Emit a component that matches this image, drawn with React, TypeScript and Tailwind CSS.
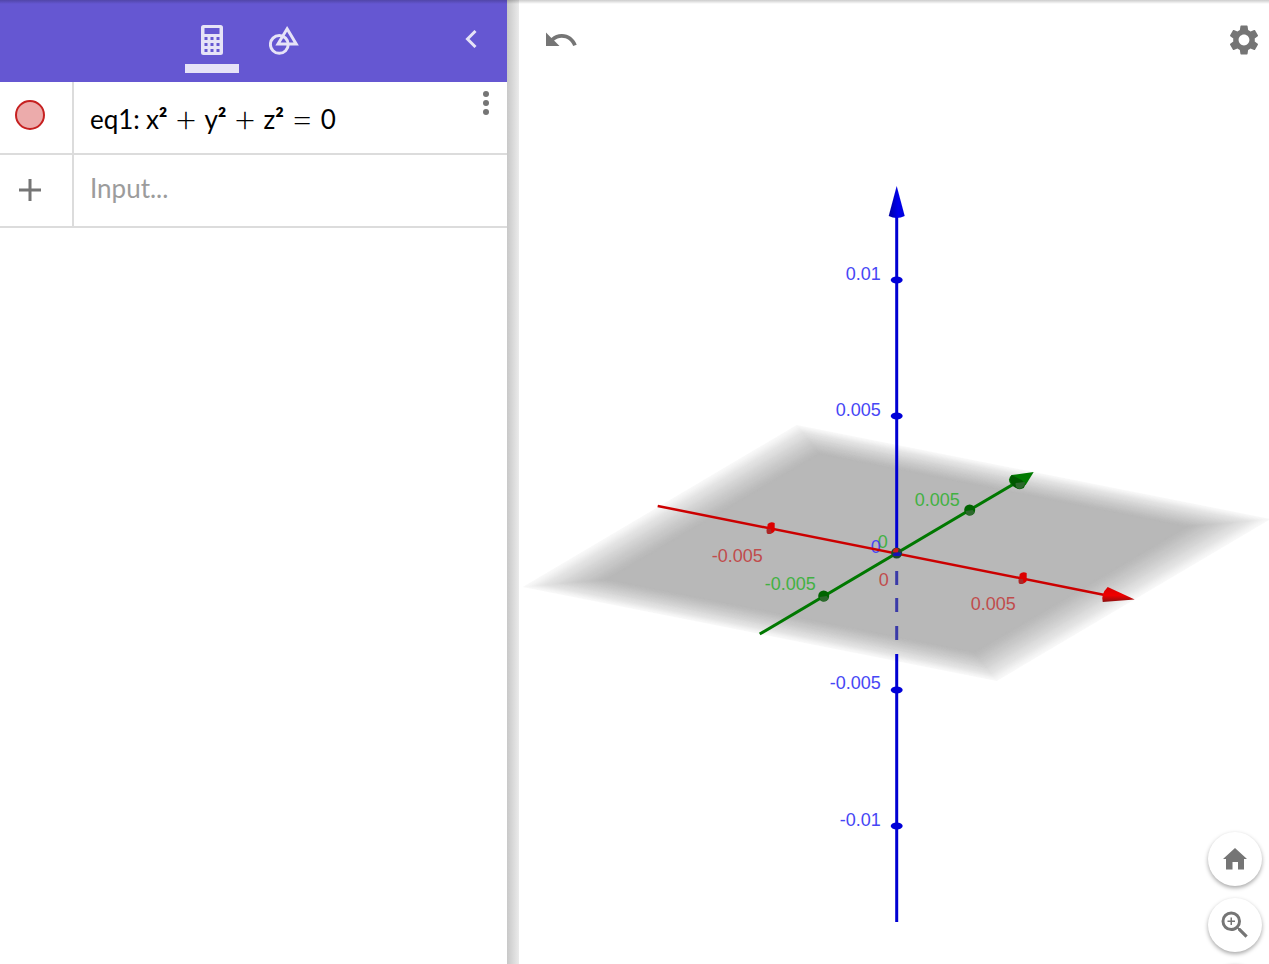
import { MdSettings, MdUndo, MdZoomIn, MdZoomOut } from 'react-icons/md';

type Point = { x: number; y: number };
type Label = Point & { text: string };

// All scene coordinates are relative to the origin of the axes
const X_LABELS: Label[] = [
  { x: -134, y: 9, text: '-0.005' },
  { x: -8, y: 33, text: '0' },
  { x: 119, y: 57, text: '0.005' },
];

const Y_LABELS: Label[] = [
  { x: -81, y: 37, text: '-0.005' },
  { x: -9, y: -5, text: '0' },
  { x: 63, y: -47, text: '0.005' },
];

const Z_LABELS: Label[] = [
  { x: -16, y: -273, text: '0.01' },
  { x: -16, y: -137, text: '0.005' },
  { x: -16, y: 0, text: '0' },
  { x: -16, y: 136, text: '-0.005' },
  { x: -16, y: 273, text: '-0.01' },
];

const X_TICKS: Point[] = [{ x: -126, y: -25 }, { x: 126, y: 25 }];
const Y_TICKS: Point[] = [{ x: -73, y: 43 }, { x: 73, y: -43 }];
const Z_TICKS = [-273, -137, 137, 273];

// The plane fades out towards its border: nested layers add up to a linear ramp
const FADE_STEPS = 32;
const FADE_WIDTH = 0.23;
const EDGE_ALPHA = 0.1;

const planeLayers = Array.from({ length: FADE_STEPS + 1 }, (_, i) => {
  const alphaAt = (n: number) => (n < 0 ? 0 : EDGE_ALPHA + (1 - EDGE_ALPHA) * (n / FADE_STEPS));
  const previous = alphaAt(i - 1);
  return {
    half: 1 - (FADE_WIDTH * i) / FADE_STEPS,
    opacity: (alphaAt(i) - previous) / (1 - previous),
  };
});

function CalculatorIcon() {
  return (
    <svg viewBox="0 0 22 30" className="h-[30px] w-[22px]" fill="currentColor" aria-hidden="true">
      <path
        fillRule="evenodd"
        d="M2.5 0h17A2.5 2.5 0 0 1 22 2.5v25a2.5 2.5 0 0 1-2.5 2.5h-17A2.5 2.5 0 0 1 0 27.5v-25A2.5 2.5 0 0 1 2.5 0zM3.5 3v6h15V3zM3.5 12v3h3v-3zM9.5 12v3h3v-3zM15.5 12v3h3v-3zM3.5 18v3h3v-3zM9.5 18v3h3v-3zM15.5 18v3h3v-3zM3.5 24v3h3v-3zM9.5 24v3h3v-3zM15.5 24v3h3v-3z"
      />
    </svg>
  );
}

function ShapesIcon() {
  return (
    <svg viewBox="0 0 30 30" className="size-[30px]" fill="none" stroke="currentColor" strokeWidth="3" aria-hidden="true">
      <circle cx="10.3" cy="19.4" r="8.9" />
      <path d="M18.1 3.8 27.2 19H9z" />
    </svg>
  );
}

function HomeIcon() {
  return (
    <svg viewBox="0 0 24 22" className="h-[22px] w-6" fill="currentColor" aria-hidden="true">
      <path d="M12 0 24 11h-3v10.5h-6V14H9.5v7.5H3V11H0z" />
    </svg>
  );
}

function AxisLabels({ labels, fill }: { labels: Label[]; fill: string }) {
  return (
    <g fill={fill} textAnchor="end" fontSize="18">
      {labels.map((label) => (
        <text key={label.text} x={label.x} y={label.y}>
          {label.text}
        </text>
      ))}
    </g>
  );
}

function Scene() {
  return (
    <svg viewBox="0 0 750 964" className="block h-full w-full font-['Liberation_Sans',Arial,sans-serif]" role="img" aria-label="3D view">
      <defs>
        <linearGradient id="coneX" x1="0" y1="0" x2="0" y2="1">
          <stop offset="0" stopColor="#d80000" />
          <stop offset="0.55" stopColor="#f00000" />
          <stop offset="1" stopColor="#8c1010" />
        </linearGradient>
        <linearGradient id="coneZ">
          <stop offset="0" stopColor="#0000a0" />
          <stop offset="0.6" stopColor="#0000ee" />
          <stop offset="1" stopColor="#0000d8" />
        </linearGradient>
      </defs>

      <g transform="translate(377.5 553)">
        {/* xOy plane */}
        <g transform="matrix(237 47 137 -81 0 0)" fill="#b8b8b8">
          {planeLayers.map(({ half, opacity }) => (
            <rect key={half} x={-half} y={-half} width={half * 2} height={half * 2} fillOpacity={opacity} />
          ))}
        </g>

        {/* Labels */}
        <AxisLabels labels={X_LABELS} fill="#c04c4c" />
        <AxisLabels labels={Y_LABELS} fill="#42b142" />
        <AxisLabels labels={Z_LABELS} fill="#4646f5" />

        {/* x axis */}
        <path d="M-239-47 208 42" stroke="#cc0000" strokeWidth="2.5" />
        {X_TICKS.map((tick) => (
          <g key={tick.x} transform={`translate(${tick.x} ${tick.y})`}>
            <path d="M-3-4Q0-7 4-5L4 3Q2 6-3 6L-4 3z" fill="#dc0000" />
            <path d="M-4 1 0 1 1 5Q-1 7-4 5z" fill="#a82828" />
          </g>
        ))}
        <path d="M211 34 238 46.5 206 49Q204 41 211 34z" fill="url(#coneX)" />

        {/* y axis */}
        <path d="M-137 81 122-72" stroke="#007800" strokeWidth="3" />
        {Y_TICKS.map((tick) => (
          <g key={tick.x} transform={`translate(${tick.x} ${tick.y})`}>
            <circle r="5.5" fill="#006400" />
            <path d="M-4 1 3 0 5 3Q2 6-1 5.5-4 4-4 1z" fill="#2c682c" />
          </g>
        ))}
        <path d="M137-81 115-78Q110-74 114-69L123-65 129-68z" fill="#007a00" />
        <path d="M115-78Q111-74 116-67 122-62 127-65 130-69 125-73z" fill="#005800" />
        <path d="M119-70 128-71Q129-66 123-64 118-65 119-70z" fill="#2c682c" />

        {/* z axis, hidden part below the plane is dashed */}
        <path d="M0-336V0M0 101V369" stroke="#0000d2" strokeWidth="3" />
        <path d="M0 18V32M0 45V59M0 73V87" stroke="#3a3aa8" strokeWidth="3" />
        {Z_TICKS.map((y) => (
          <ellipse key={y} cy={y} rx="6" ry="3.5" fill="#0000d8" />
        ))}
        <path d="M0-367 8-337Q0-333-8-337z" fill="url(#coneZ)" />

        {/* Origin */}
        <circle r="5.5" fill="#1d4a2a" />
        <path d="M-3-4Q0-6 2-4L1 0-4-1z" fill="#d01818" />
        <path d="M-4 1Q0-2 5 0L3 3-3 3z" fill="#1414b4" />
      </g>
    </svg>
  );
}

function AlgebraHeader() {
  return (
    <header className="flex h-[82px] shrink-0 items-start bg-[#6557d2] pt-4 pr-6 pl-[37px] text-[#e6e3f7]">
      <nav className="flex flex-1 justify-center gap-[18px]">
        <button
          type="button"
          aria-label="Algebra"
          className="flex h-[57px] w-[54px] justify-center border-b-[9px] border-[#e6e3f7] pt-[9px]"
        >
          <CalculatorIcon />
        </button>
        <button type="button" aria-label="Tools" className="flex h-[57px] w-[54px] justify-center pt-[9px]">
          <ShapesIcon />
        </button>
      </nav>
      <button type="button" aria-label="Close panel" className="flex h-[46px] w-6 items-center justify-center">
        <svg viewBox="0 0 12 18" className="h-[18px] w-3" fill="none" stroke="currentColor" strokeWidth="3" aria-hidden="true">
          <path d="M10.5 1 2.5 9l8 8" />
        </svg>
      </button>
    </header>
  );
}

function Squared({ name }: { name: string }) {
  return (
    <span>
      {name}
      <span className="font-bold">²</span>
    </span>
  );
}

function Operator({ sign }: { sign: string }) {
  return <span className="text-[36px] leading-8 font-light">{sign}</span>;
}

function EquationRow() {
  return (
    <div className="flex h-[73px] border-b-2 border-[#dcdcdc]">
      <div className="w-[74px] shrink-0 border-r-2 border-[#dcdcdc] pt-[18px] pl-[15px]">
        <button
          type="button"
          aria-label="Show or hide eq1"
          className="block size-[30px] rounded-full border-2 border-[#c62020] bg-[#ecabab]"
        />
      </div>
      <div className="flex flex-1 items-center gap-2 pt-[2px] pl-4 text-[26px] leading-8 text-black">
        <span className="flex gap-[6px]">
          <span>eq1:</span>
          <Squared name="x" />
        </span>
        <Operator sign="+" />
        <Squared name="y" />
        <Operator sign="+" />
        <Squared name="z" />
        <Operator sign="=" />
        <span>0</span>
      </div>
      <button type="button" aria-label="More" className="flex w-[42px] shrink-0 justify-center pt-[9px]">
        <svg viewBox="0 0 6 24" className="h-6 w-[6px]" fill="#757575" aria-hidden="true">
          <circle cx="3" cy="3" r="3" />
          <circle cx="3" cy="12" r="3" />
          <circle cx="3" cy="21" r="3" />
        </svg>
      </button>
    </div>
  );
}

function InputRow() {
  return (
    <div className="flex h-[73px] border-b-2 border-[#dcdcdc]">
      <div className="flex w-[74px] shrink-0 items-center border-r-2 border-[#dcdcdc] pb-[2px] pl-[19px]">
        <button type="button" aria-label="Add" className="block text-[#757575]">
          <svg viewBox="0 0 22 22" className="size-[22px]" stroke="currentColor" strokeWidth="3" aria-hidden="true">
            <path d="M11 0v22M0 11h22" />
          </svg>
        </button>
      </div>
      <input
        type="text"
        aria-label="Input"
        placeholder="Input..."
        className="min-w-0 flex-1 pb-1 pl-4 text-[26px] outline-none placeholder:text-[#9c9c9c]"
      />
    </div>
  );
}

const ROUND_BUTTON =
  'flex size-[54px] items-center justify-center rounded-full bg-white shadow-[0_2px_4px_rgba(0,0,0,0.35)]';

export default function App() {
  return (
    <div className="relative flex h-screen overflow-hidden bg-white font-[Lato,sans-serif]">
      <aside className="flex w-[calc(40%-1px)] shrink-0 flex-col">
        <AlgebraHeader />
        <EquationRow />
        <InputRow />
      </aside>

      <div className="w-3 shrink-0 bg-linear-to-r from-[#c8c8c8] to-[#ebebeb]" />

      <main className="relative min-w-0 flex-1 text-[#757575]">
        <Scene />
        <div className="absolute inset-x-0 top-[22px] flex justify-between pr-[7px] pl-6">
          <button type="button" aria-label="Undo">
            <MdUndo size={36} />
          </button>
          <button type="button" aria-label="Settings">
            <MdSettings size={36} />
          </button>
        </div>
        <div className="absolute right-[7px] -bottom-[54px] flex flex-col gap-3">
          <button type="button" aria-label="Standard view" className={ROUND_BUTTON}>
            <HomeIcon />
          </button>
          <button type="button" aria-label="Zoom in" className={ROUND_BUTTON}>
            <MdZoomIn size={36} />
          </button>
          <button type="button" aria-label="Zoom out" className={ROUND_BUTTON}>
            <MdZoomOut size={36} />
          </button>
        </div>
      </main>

      <div className="pointer-events-none absolute inset-x-0 top-0 h-1 bg-linear-to-b from-black/20 to-transparent" />
    </div>
  );
}
